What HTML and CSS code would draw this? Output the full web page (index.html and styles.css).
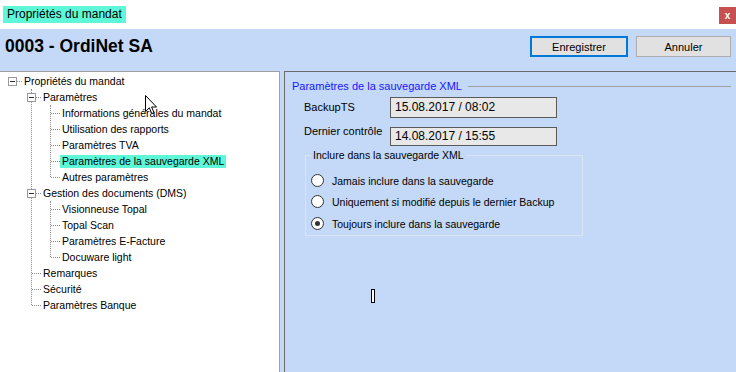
FILE: index.html
```html
<!DOCTYPE html>
<html lang="fr">
<head>
<meta charset="utf-8">
<title>Propriétés du mandat</title>
<link rel="stylesheet" href="styles.css">
</head>
<body>
<div class="window">
  <div class="titlebar">
    <span class="title">Propriétés du mandat</span>
    <button class="close">x</button>
  </div>
  <div class="header">
    <h1 class="mandat">0003 - OrdiNet SA</h1>
    <div class="actions">
      <button class="btn btn-primary">Enregistrer</button>
      <button class="btn">Annuler</button>
    </div>
  </div>
  <div class="main">
    <div class="tree-pane">
      <ul class="tree">
        <li>
          <div class="row"><span class="gutter root"><span class="exp"></span></span><span class="label">Propriétés du mandat</span></div>
          <ul class="children">
            <li>
              <div class="row"><span class="gutter"><span class="exp"></span></span><span class="label">Paramètres</span></div>
              <ul class="children">
                <li><div class="row"><span class="gutter"></span><span class="label">Informations générales du mandat</span></div></li>
                <li><div class="row"><span class="gutter"></span><span class="label">Utilisation des rapports</span></div></li>
                <li><div class="row"><span class="gutter"></span><span class="label">Paramètres TVA</span></div></li>
                <li><div class="row selected"><span class="gutter"></span><span class="label">Paramètres de la sauvegarde XML</span></div></li>
                <li><div class="row"><span class="gutter"></span><span class="label">Autres paramètres</span></div></li>
              </ul>
            </li>
            <li>
              <div class="row"><span class="gutter"><span class="exp"></span></span><span class="label">Gestion des documents (DMS)</span></div>
              <ul class="children">
                <li><div class="row"><span class="gutter"></span><span class="label">Visionneuse Topal</span></div></li>
                <li><div class="row"><span class="gutter"></span><span class="label">Topal Scan</span></div></li>
                <li><div class="row"><span class="gutter"></span><span class="label">Paramètres E-Facture</span></div></li>
                <li><div class="row"><span class="gutter"></span><span class="label">Docuware light</span></div></li>
              </ul>
            </li>
            <li><div class="row"><span class="gutter"></span><span class="label">Remarques</span></div></li>
            <li><div class="row"><span class="gutter"></span><span class="label">Sécurité</span></div></li>
            <li><div class="row"><span class="gutter"></span><span class="label">Paramètres Banque</span></div></li>
          </ul>
        </li>
      </ul>
    </div>
    <div class="splitter"></div>
    <div class="content">
      <div class="group-title">
        <span class="legend">Paramètres de la sauvegarde XML</span>
        <span class="rule"></span>
      </div>
      <div class="field">
        <span class="field-label">BackupTS</span>
        <div class="input">15.08.2017 / 08:02</div>
      </div>
      <div class="field field-2">
        <span class="field-label">Dernier contrôle</span>
        <div class="input">14.08.2017 / 15:55</div>
      </div>
      <fieldset class="options">
        <legend>Inclure dans la sauvegarde XML</legend>
        <div class="radio"><span class="dot"></span><span>Jamais inclure dans la sauvegarde</span></div>
        <div class="radio"><span class="dot"></span><span>Uniquement si modifié depuis le dernier Backup</span></div>
        <div class="radio"><span class="dot checked"></span><span>Toujours inclure dans la sauvegarde</span></div>
      </fieldset>
      <span class="ibeam"></span>
    </div>
  </div>
  <svg class="cursor" width="13" height="21" viewBox="0 0 13 21">
    <path d="M0.5 0.5 L0.5 16.5 L4.3 12.8 L6.8 18.6 L9 17.6 L6.6 12 L11.5 12 Z" fill="#fff" stroke="#000" stroke-width="1" stroke-linejoin="miter"/>
  </svg>
</div>
</body>
</html>
```

FILE: styles.css
```css
* { box-sizing: border-box; }

html, body {
  margin: 0;
  padding: 0;
}

body {
  width: 736px;
  height: 372px;
  overflow: hidden;
  font-family: "Liberation Sans", Arial, sans-serif;
  color: #000;
  background: #c4d9f7;
}

.window {
  position: relative;
  width: 736px;
  height: 372px;
  display: flex;
  flex-direction: column;
}

/* title bar */
.titlebar {
  height: 29px;
  background: #fff;
  display: flex;
  align-items: flex-start;
  justify-content: space-between;
  flex: none;
}

.title {
  margin: 6px 0 0 3px;
  height: 17px;
  line-height: 17px;
  padding: 0 4px;
  font-size: 12px;
  background: #5ef8d8;
  color: #000;
}

.close {
  margin-top: 7px;
  width: 17px;
  height: 17px;
  border: 0;
  padding: 0;
  background: #c75050;
  color: #fff;
  font-family: "Liberation Sans", Arial, sans-serif;
  font-size: 10px;
  font-weight: bold;
  line-height: 15px;
}

/* header */
.header {
  height: 42px;
  flex: none;
  display: flex;
  align-items: flex-start;
  justify-content: space-between;
  padding: 7px 5px 0 5px;
}

.mandat {
  margin: 0;
  font-size: 17.5px;
  font-weight: bold;
  line-height: 21px;
}

.actions {
  display: flex;
  gap: 8px;
}

.btn {
  height: 21px;
  width: 95px;
  padding: 0;
  font-family: "Liberation Sans", Arial, sans-serif;
  font-size: 11px;
  color: #000;
  background: #e1e1e1;
  border: 1px solid #adadad;
}

.btn-primary {
  width: 98px;
  border: 2px solid #0078d7;
}

/* main area */
.main {
  flex: 1;
  display: flex;
  min-height: 0;
}

.tree-pane {
  width: 280px;
  flex: none;
  background: #fff;
  border-top: 1px solid #a0a0a0;
  border-right: 1px solid #a0a0a0;
  padding: 1px 0 0 3px;
  font-size: 10.5px;
}

.splitter {
  width: 4px;
  flex: none;
}

.tree, .children {
  list-style: none;
  margin: 0;
  padding: 0;
}

.children {
  margin-left: 19px;
  position: relative;
}

.children::before {
  content: "";
  position: absolute;
  left: 9px;
  top: 0;
  bottom: 8px;
  border-left: 1px dotted #8c8c8c;
}

.row {
  height: 16px;
  display: flex;
  align-items: center;
  white-space: nowrap;
}

.gutter {
  position: relative;
  width: 19px;
  height: 16px;
  flex: none;
}

.gutter::before {
  content: "";
  position: absolute;
  left: 10px;
  width: 9px;
  top: 8px;
  border-top: 1px dotted #8c8c8c;
}

.exp {
  position: absolute;
  left: 5px;
  top: 4px;
  width: 9px;
  height: 9px;
  background: #fff;
  border: 1px solid #9a9a9a;
  z-index: 1;
}

.exp::after {
  content: "";
  position: absolute;
  left: 1px;
  top: 3px;
  width: 5px;
  height: 1px;
  background: #2b2b2b;
}

.label {
  margin-left: 2px;
  line-height: 16px;
}

.selected .label {
  margin-left: 0;
  padding: 0 2px;
  height: 13px;
  line-height: 13px;
  background: #5ef8d8;
}

/* content panel */
.content {
  flex: 1;
  position: relative;
  border-top: 1px solid #6b6b6b;
  border-left: 1px solid #6b6b6b;
  padding: 8px 5px 0 0;
}

.group-title {
  display: flex;
  align-items: center;
  padding-left: 7px;
  height: 13px;
}

.legend {
  font-size: 11px;
  line-height: 13px;
  color: #1616ff;
  white-space: nowrap;
}

.rule {
  flex: 1;
  margin-left: 6px;
  border-top: 1px solid #a0a0a0;
  margin-top: 0;
}

.field {
  display: flex;
  align-items: flex-start;
  margin: 4px 0 0 19px;
  height: 21px;
}

.field-2 {
  margin-top: 9px;
  height: 19px;
}

.field-label {
  width: 86px;
  font-size: 11px;
  line-height: 13px;
  margin-top: 4px;
}

.field-2 .field-label {
  margin-top: -2px;
}

.input {
  width: 167px;
  height: 100%;
  border: 1px solid #5a5a5a;
  background: #e8e8e8;
  font-size: 12px;
  line-height: 18px;
  padding-left: 4px;
}

.field-2 .input {
  line-height: 17px;
}

.options {
  margin: 3px 0 0 20px;
  width: 278px;
  padding: 8px 0 1px 5px;
  border: 1px solid #d9e4f2;
  font-size: 10.5px;
}

.options legend {
  padding: 0 2px;
  line-height: 13px;
}

.radio {
  display: flex;
  align-items: center;
  height: 21px;
  white-space: nowrap;
}

.radio + .radio + .radio {
  margin-top: 1px;
}

.dot {
  position: relative;
  width: 13px;
  height: 13px;
  border-radius: 50%;
  border: 1px solid #333;
  background: #fff;
  margin-right: 8px;
  flex: none;
}

.dot.checked::after {
  content: "";
  position: absolute;
  left: 3px;
  top: 3px;
  width: 5px;
  height: 5px;
  border-radius: 50%;
  background: #333;
}

.ibeam {
  position: absolute;
  left: 86px;
  top: 217px;
  width: 4px;
  height: 14px;
  border: 1px solid #000;
  background: #fff;
}

.cursor {
  position: absolute;
  left: 145px;
  top: 95px;
}
```
